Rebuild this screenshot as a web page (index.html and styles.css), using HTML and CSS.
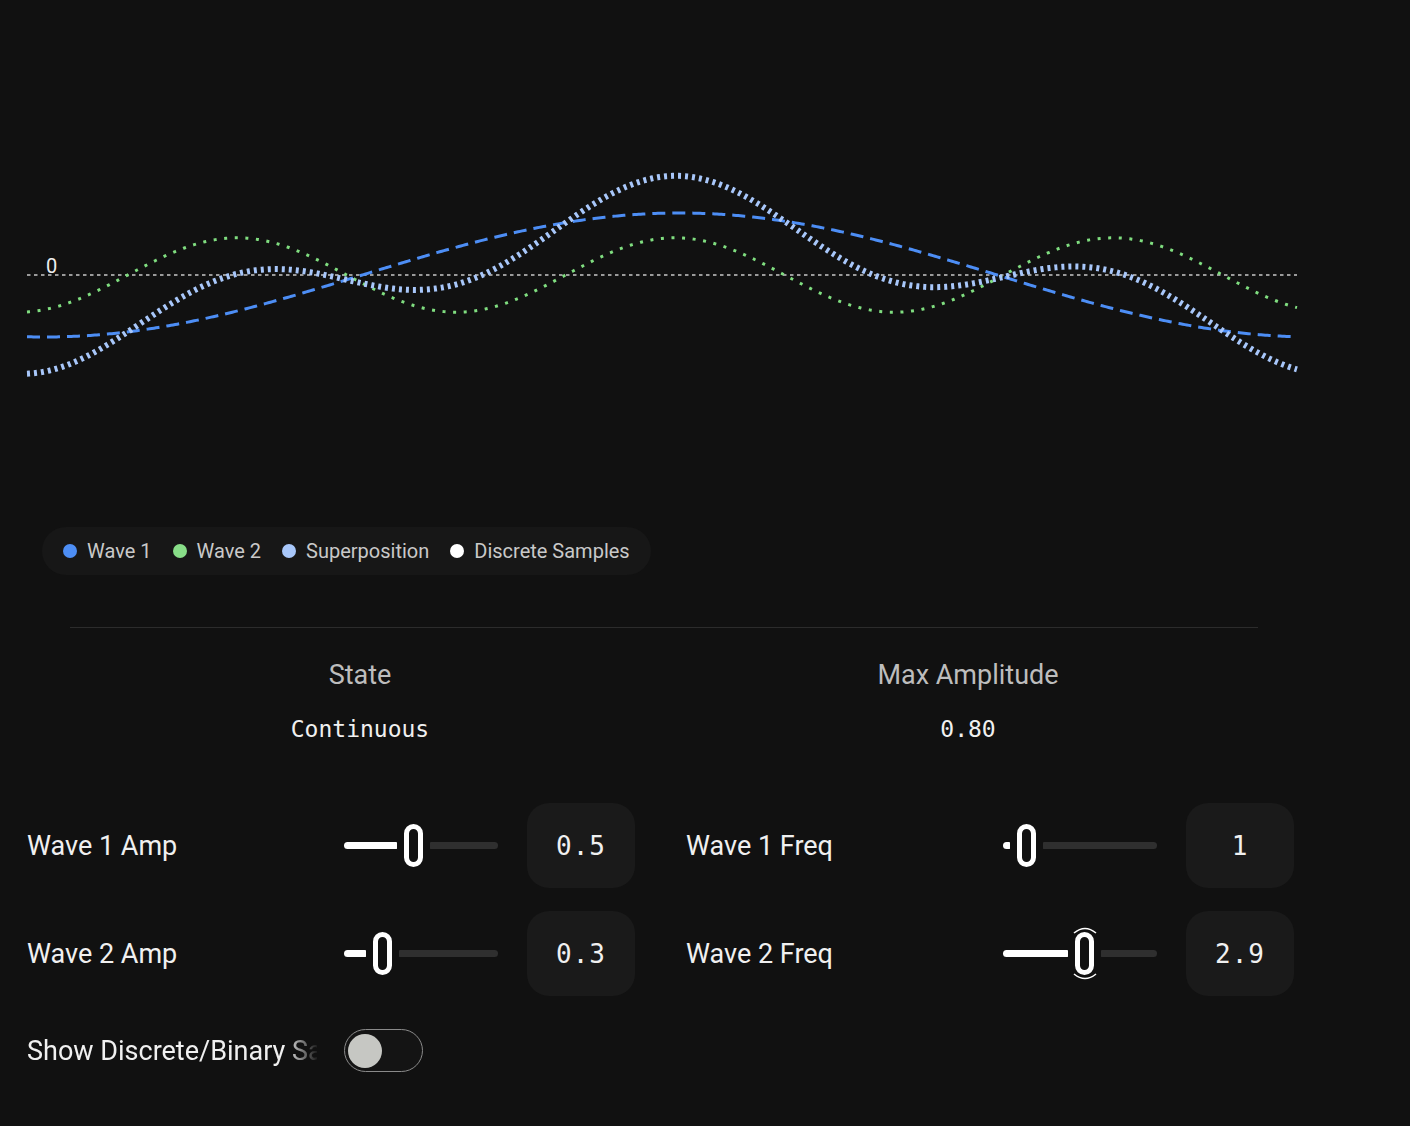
FILE: index.html
```html
<!DOCTYPE html>
<html lang="en">
<head>
<meta charset="utf-8">
<title>Wave Superposition</title>
<link rel="stylesheet" href="styles.css">
</head>
<body>
<div class="app">
  <div class="chart">
    <svg class="chart-svg" width="1270" height="500" viewBox="0 0 1270 500">
      <line class="zero-line" x1="0" y1="275" x2="1270" y2="275"/>
      <text class="zero-label" x="19" y="273">0</text>
      <path id="w2" class="wave wave2" d=""/>
      <path id="w1" class="wave wave1" d=""/>
      <path id="ws" class="wave wave-sum" d=""/>
    </svg>
  </div>

  <div class="legend">
    <div class="legend-item"><span class="dot dot-w1"></span>Wave 1</div>
    <div class="legend-item"><span class="dot dot-w2"></span>Wave 2</div>
    <div class="legend-item"><span class="dot dot-sum"></span>Superposition</div>
    <div class="legend-item"><span class="dot dot-disc"></span>Discrete Samples</div>
  </div>

  <div class="divider"></div>

  <div class="stats">
    <div class="stat">
      <div class="stat-label">State</div>
      <div class="stat-value">Continuous</div>
    </div>
    <div class="stat">
      <div class="stat-label">Max Amplitude</div>
      <div class="stat-value">0.80</div>
    </div>
  </div>

  <div class="controls">
    <div class="control">
      <div class="control-label">Wave 1 Amp</div>
      <div class="slider">
        <span class="track-active" style="width:53px"></span>
        <span class="thumb"></span>
        <span class="track-inactive"></span>
      </div>
      <div class="value-box">0.5</div>
    </div>
    <div class="control">
      <div class="control-label">Wave 1 Freq</div>
      <div class="slider">
        <span class="track-active" style="width:7px"></span>
        <span class="thumb"></span>
        <span class="track-inactive"></span>
      </div>
      <div class="value-box">1</div>
    </div>
    <div class="control">
      <div class="control-label">Wave 2 Amp</div>
      <div class="slider">
        <span class="track-active" style="width:22px"></span>
        <span class="thumb"></span>
        <span class="track-inactive"></span>
      </div>
      <div class="value-box">0.3</div>
    </div>
    <div class="control">
      <div class="control-label">Wave 2 Freq</div>
      <div class="slider">
        <span class="track-active" style="width:65px"></span>
        <span class="thumb thumb-focus">
          <svg class="focus-arcs" width="30" height="57" viewBox="0 0 30 57">
            <path d="M4 8 Q15 -1 26 8" />
            <path d="M4 49 Q15 58 26 49" />
          </svg>
        </span>
        <span class="track-inactive"></span>
      </div>
      <div class="value-box">2.9</div>
    </div>
    <div class="control toggle-row">
      <div class="control-label fade">Show Discrete/Binary Samples</div>
      <div class="switch"><span class="knob"></span></div>
    </div>
  </div>
</div>
<script src="script.js"></script>
</body>
</html>
```

FILE: styles.css
```css
* { box-sizing: border-box; }

html, body {
  margin: 0;
  padding: 0;
  background: #111111;
  color: #e8e8e8;
  font-family: Roboto, "Liberation Sans", sans-serif;
}

.app {
  width: 1270px;
  margin-left: 27px;
  padding-bottom: 40px;
}

.chart-svg {
  display: block;
  overflow: visible;
}

.zero-line {
  stroke: #9a9a9a;
  stroke-width: 2;
  stroke-dasharray: 3.5 3.5;
}

.zero-label {
  fill: #eeeeee;
  font-family: Roboto, "Liberation Sans", sans-serif;
  font-size: 20px;
}

.wave {
  fill: none;
}

.wave1 {
  stroke: #4d8ef5;
  stroke-width: 3;
  stroke-dasharray: 13 7;
}

.wave2 {
  stroke: #80de80;
  stroke-width: 3;
  stroke-dasharray: 3 7.6;
}

.wave-sum {
  stroke: #a8c7fa;
  stroke-width: 6;
  stroke-dasharray: 3 4;
}

.legend {
  display: inline-flex;
  align-items: center;
  gap: 21px;
  margin-top: 27px;
  margin-left: 15px;
  height: 48px;
  padding: 0 21px;
  border-radius: 24px;
  background: #171717;
}

.legend-item {
  display: flex;
  align-items: center;
  gap: 10px;
  font-size: 20px;
  color: #c9c9c9;
}

.dot {
  width: 14px;
  height: 14px;
  border-radius: 50%;
  display: inline-block;
}
.dot-w1 { background: #4d8ef5; }
.dot-w2 { background: #88de88; }
.dot-sum { background: #a8c7fa; }
.dot-disc { background: #ffffff; }

.divider {
  margin-top: 52px;
  margin-left: 43px;
  width: 1188px;
  height: 1px;
  background: #2c2c2c;
}

.stats {
  display: grid;
  grid-template-columns: 580px 580px;
  column-gap: 28px;
  margin-left: 43px;
  width: 1188px;
  margin-top: 32px;
}

.stat {
  display: flex;
  flex-direction: column;
  align-items: center;
  gap: 24px;
}

.stat-label {
  font-size: 27px;
  line-height: 30px;
  color: #bdbdbd;
}

.stat-value {
  font-family: "DejaVu Sans Mono", "Liberation Mono", monospace;
  font-size: 23px;
  line-height: 30px;
  color: #f0f0f0;
}

.controls {
  display: grid;
  grid-template-columns: 609px 609px;
  column-gap: 50px;
  row-gap: 23px;
  margin-top: 59px;
}

.control {
  display: flex;
  align-items: center;
  height: 85px;
}

.control-label {
  width: 290px;
  margin-right: 27px;
  font-size: 27px;
  color: #f0f0f0;
  white-space: nowrap;
  overflow: hidden;
}

.control-label.fade {
  -webkit-mask-image: linear-gradient(to right, #000 0, #000 258px, transparent 292px);
  mask-image: linear-gradient(to right, #000 0, #000 258px, transparent 292px);
}

.slider {
  width: 154px;
  height: 44px;
  display: flex;
  align-items: center;
  gap: 7px;
}

.track-active {
  height: 7px;
  background: #ffffff;
  border-radius: 4px 1px 1px 4px;
  flex: none;
}

.thumb {
  position: relative;
  width: 19px;
  height: 43px;
  border: 5px solid #ffffff;
  border-radius: 10px;
  background: #111111;
  flex: none;
}

.focus-arcs {
  position: absolute;
  left: -10.5px;
  top: -12px;
  fill: none;
  stroke: #ffffff;
  stroke-width: 1.6;
}

.track-inactive {
  flex: 1;
  height: 7px;
  background: #2f2f2f;
  border-radius: 1px 4px 4px 1px;
}

.value-box {
  width: 108px;
  height: 85px;
  margin-left: 29px;
  border-radius: 22px;
  background: #1a1a1a;
  display: flex;
  align-items: center;
  justify-content: center;
  font-family: "DejaVu Sans Mono", "Liberation Mono", monospace;
  font-size: 26px;
  letter-spacing: 1px;
  color: #f0f0f0;
}

.toggle-row {
  height: 43px;
  margin-top: 10px;
}

.switch {
  width: 79px;
  height: 43px;
  border: 1.5px solid #8a8a8a;
  border-radius: 22px;
  background: #141414;
  display: flex;
  align-items: center;
  padding-left: 3px;
}

.knob {
  width: 34px;
  height: 34px;
  border-radius: 50%;
  background: #c6c7c3;
}
```

FILE: script.js
```javascript
(function () {
  var W = 1270, Z = 275, S = 124, N = 600;
  function w1(t) { return -0.5 * Math.cos(2 * Math.PI * (t - 0.014)); }
  function w2(t) { return -0.3 * Math.cos(2 * Math.PI * (2.9 * t + 0.02)); }
  function ws(t) { return w1(t) + w2(t); }
  function path(fn) {
    var d = '';
    for (var i = 0; i <= N; i++) {
      var t = i / N;
      var x = t * W;
      var y = Z - S * fn(t);
      d += (i ? 'L' : 'M') + x.toFixed(2) + ' ' + y.toFixed(2);
    }
    return d;
  }
  document.getElementById('w1').setAttribute('d', path(w1));
  document.getElementById('w2').setAttribute('d', path(w2));
  document.getElementById('ws').setAttribute('d', path(ws));
})();
```
